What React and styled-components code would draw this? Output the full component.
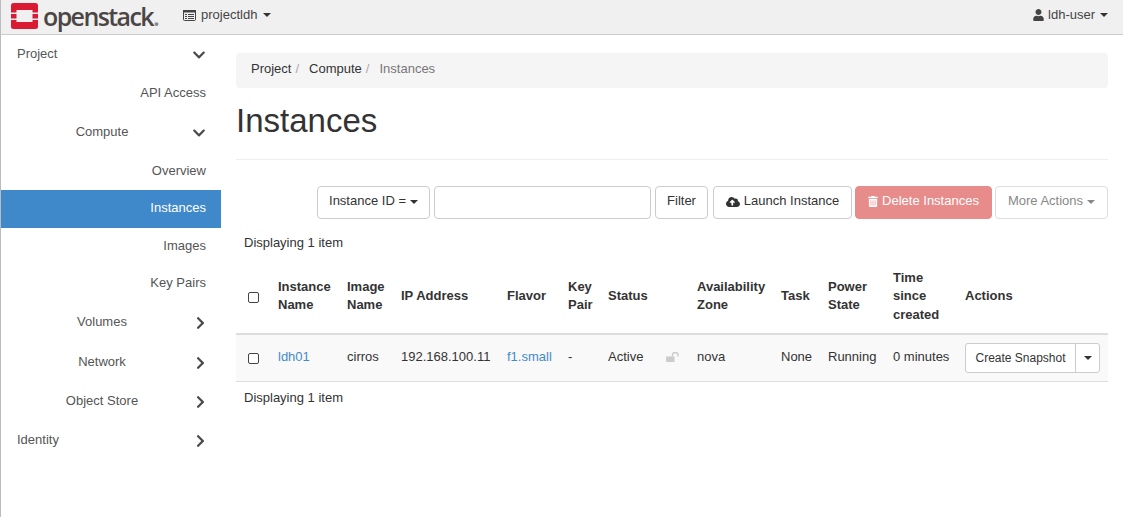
import React from 'react';
import styled, { createGlobalStyle } from 'styled-components';
import {
  FaChevronDown,
  FaChevronRight,
  FaCloudUploadAlt,
  FaTrashAlt,
  FaUser
} from 'react-icons/fa';

const GlobalStyle = createGlobalStyle`
  html, body {
    margin: 0;
    padding: 0;
    background: #fff;
    overflow: hidden;
  }
  body {
    font-family: "Liberation Sans", Arial, sans-serif;
    font-size: 13px;
    line-height: 18.57px;
    color: #333;
  }
  * {
    box-sizing: border-box;
  }
`;

const sideItems = [
  { label: 'Project', kind: 'top', open: true, height: 39 },
  { label: 'API Access', kind: 'leaf', height: 38 },
  { label: 'Compute', kind: 'group', open: true, height: 41 },
  { label: 'Overview', kind: 'leaf', height: 37 },
  { label: 'Instances', kind: 'leaf', active: true, height: 38 },
  { label: 'Images', kind: 'leaf', height: 36 },
  { label: 'Key Pairs', kind: 'leaf', height: 38 },
  { label: 'Volumes', kind: 'group', height: 41 },
  { label: 'Network', kind: 'group', height: 39 },
  { label: 'Object Store', kind: 'group', height: 39 },
  { label: 'Identity', kind: 'top', height: 39 }
];

const columns = [34, 69, 54, 106, 61, 40, 89, 84, 47, 65, 72, 151];

const Logo = () => (
  <svg width="27" height="26" viewBox="0 0 27 26" aria-hidden="true">
    <path
      fill="#da1a32"
      d="M2.500 0h22a2.500 2.500 0 0 1 2.500 2.500v7h-5.500V7H5.500v2.500H0v-7A2.500 2.500 0 0 1 2.500 0zM0 11h5.500v4.500H0zM21.500 11H27v4.500h-5.500zM0 17h5.500v2h16v-2H27v6.500a2.500 2.500 0 0 1-2.500 2.500h-22A2.500 2.500 0 0 1 0 23.500z"
    />
  </svg>
);

const ProjectIcon = () => (
  <svg width="13" height="11" viewBox="0 0 13 11" aria-hidden="true">
    <rect x="0.500" y="0.500" width="12" height="10" rx="1" fill="none" stroke="currentColor" />
    <path fill="currentColor" d="M0 0h13v2.500H0zM2 4h2v1H2zM5 4h6v1H5zM2 6h2v1H2zM5 6h6v1H5zM2 8h2v1H2zM5 8h6v1H5z" />
  </svg>
);

const OpenLock = () => (
  <svg width="13" height="10" viewBox="0 0 13 10" aria-hidden="true">
    <path fill="currentColor" d="M1 4.500h7.500V10H1a1 1 0 0 1-1-1V5.500a1 1 0 0 1 1-1z" />
    <path fill="none" stroke="currentColor" strokeWidth="1.500" d="M6.500 4.500V3a2.500 2.300 0 0 1 5.500 0v1.500" />
  </svg>
);

const App = () => {
  return (
    <Page>
      <GlobalStyle />
      <TopBar>
        <Brand>
          <Logo />
          <BrandName>openstack<BrandDot>.</BrandDot></BrandName>
        </Brand>
        <ProjectPicker>
          <ProjectIcon />
          projectldh
          <Caret />
        </ProjectPicker>
        <UserMenu>
          <FaUser />
          ldh-user
          <Caret />
        </UserMenu>
      </TopBar>

      <Body>
        <Sidebar>
          {sideItems.map((item) => (
            <SideRow
              key={item.label}
              $kind={item.kind}
              $active={item.active}
              $height={item.height}
            >
              <SideLabel $kind={item.kind}>{item.label}</SideLabel>
              {item.kind !== 'leaf' && (
                <SideChevron $open={item.open}>
                  {item.open ? <FaChevronDown /> : <FaChevronRight />}
                </SideChevron>
              )}
            </SideRow>
          ))}
        </Sidebar>

        <Main>
          <Breadcrumb>
            <Crumb>Project</Crumb>
            <CrumbSep>/</CrumbSep>
            <Crumb>Compute</Crumb>
            <CrumbSep>/</CrumbSep>
            <Crumb $current>Instances</Crumb>
          </Breadcrumb>

          <PageHeader>
            <Title>Instances</Title>
          </PageHeader>

          <Toolbar>
            <Button $width={113}>Instance ID = <Caret $dark /></Button>
            <SearchInput />
            <FilterButton>Filter</FilterButton>
            <Button $width={139}><FaCloudUploadAlt /> Launch Instance</Button>
            <DangerButton><FaTrashAlt /> Delete Instances</DangerButton>
            <MutedButton>More Actions <Caret $muted /></MutedButton>
          </Toolbar>

          <Summary>Displaying 1 item</Summary>

          <Table>
            <colgroup>
              {columns.map((width, i) => (
                <col key={i} style={{ width }} />
              ))}
            </colgroup>
            <thead>
              <tr>
                <Th><CheckBox type="checkbox" /></Th>
                <Th>Instance Name</Th>
                <Th>Image Name</Th>
                <Th>IP Address</Th>
                <Th>Flavor</Th>
                <Th>Key Pair</Th>
                <Th>Status</Th>
                <Th>Availability Zone</Th>
                <Th>Task</Th>
                <Th>Power State</Th>
                <Th>Time since created</Th>
                <Th>Actions</Th>
              </tr>
            </thead>
            <tbody>
              <tr>
                <Td><CheckBox type="checkbox" /></Td>
                <Td><TableLink>ldh01</TableLink></Td>
                <Td>cirros</Td>
                <Td>192.168.100.11</Td>
                <Td><TableLink>f1.small</TableLink></Td>
                <Td>-</Td>
                <Td>
                  <StatusCell>
                    Active
                    <LockIcon><OpenLock /></LockIcon>
                  </StatusCell>
                </Td>
                <Td>nova</Td>
                <Td>None</Td>
                <Td>Running</Td>
                <Td>0 minutes</Td>
                <Td>
                  <SplitButton>
                    <SplitMain>Create Snapshot</SplitMain>
                    <SplitToggle><Caret $dark /></SplitToggle>
                  </SplitButton>
                </Td>
              </tr>
            </tbody>
          </Table>

          <Summary $after>Displaying 1 item</Summary>
        </Main>
      </Body>
    </Page>
  );
};

const Page = styled.div`
  width: 1123px;
  height: 517px;
  overflow: hidden;
  background: #fff;
`;

const TopBar = styled.header`
  display: flex;
  align-items: center;
  height: 35px;
  padding: 0 15px 2px 10px;
  background: #f0f0f0;
  border-left: 1px solid #bbb;
  border-bottom: 1px solid #ccc;
  color: #444;
`;

const Brand = styled.div`
  display: flex;
  align-items: center;
  gap: 5px;
  width: 172px;
  svg {
    flex: none;
  }
`;

const BrandName = styled.span`
  font-family: "Open Sans", sans-serif;
  font-size: 25px;
  font-weight: 600;
  line-height: 30px;
  letter-spacing: -1.6px;
  color: #4b4645;
`;

const BrandDot = styled.span`
  color: #888;
`;

const ProjectPicker = styled.div`
  display: flex;
  align-items: center;
  gap: 5px;
  margin-bottom: 2px;
`;

const UserMenu = styled.div`
  display: flex;
  align-items: center;
  gap: 4px;
  margin-left: auto;
  margin-bottom: 2px;
  svg {
    width: 11px;
    height: 12px;
  }
`;

const Caret = styled.span`
  display: inline-block;
  width: 0;
  height: 0;
  margin-left: ${(p) => (p.$dark || p.$muted ? '0' : '1px')};
  vertical-align: middle;
  border-top: 4px solid ${(p) => (p.$muted ? '#888' : '#333')};
  border-left: 4px solid transparent;
  border-right: 4px solid transparent;
`;

const Body = styled.div`
  display: flex;
  align-items: flex-start;
`;

const Sidebar = styled.nav`
  flex: none;
  width: 221px;
  height: 482px;
  border-left: 1px solid #bbb;
`;

const SideRow = styled.div`
  display: flex;
  align-items: center;
  height: ${(p) => p.$height}px;
  padding: 0 15px ${(p) => (p.$active ? '2px' : '0')} ${(p) => (p.$kind === 'top' ? '16px' : '11px')};
  color: ${(p) => (p.$active ? '#fff' : '#555')};
  background: ${(p) => (p.$active ? '#3f88c9' : 'transparent')};
`;

const SideLabel = styled.span`
  flex: 1;
  text-align: ${(p) => (p.$kind === 'top' ? 'left' : p.$kind === 'leaf' ? 'right' : 'center')};
`;

const SideChevron = styled.span`
  flex: none;
  display: flex;
  justify-content: center;
  width: 14px;
  padding-left: ${(p) => (p.$open ? '0' : '3px')};
  color: #4a4a4a;
  svg {
    width: 14px;
    height: 14px;
  }
`;

const Main = styled.main`
  flex: none;
  width: 872px;
  margin-left: 15px;
  padding-top: 18px;
`;

const Breadcrumb = styled.div`
  display: flex;
  align-items: flex-start;
  height: 35px;
  padding: 7px 15px 0;
  background: #f5f5f5;
  border-radius: 4px;
`;

const Crumb = styled.span`
  color: ${(p) => (p.$current ? '#777' : '#333')};
`;

const CrumbSep = styled.span`
  color: #aaa;
  margin: 0 10px 0 4px;
`;

const PageHeader = styled.div`
  height: 72px;
  padding-top: 13px;
  border-bottom: 1px solid #eee;
`;

const Title = styled.h1`
  margin: 0;
  font-size: 33px;
  font-weight: 400;
  line-height: 40px;
  color: #333;
`;

const Toolbar = styled.div`
  display: flex;
  justify-content: flex-end;
  gap: 3px;
  margin-top: 26px;
`;

const Button = styled.button`
  display: inline-flex;
  align-items: center;
  justify-content: center;
  gap: 4px;
  width: ${(p) => (p.$width ? `${p.$width}px` : 'auto')};
  height: 33px;
  padding: 0 10px 2px;
  background: #fff;
  border: 1px solid #ccc;
  border-radius: 4px;
  color: #333;
  font: inherit;
  white-space: nowrap;
  svg {
    width: 14px;
    height: 14px;
  }
`;

const FilterButton = styled(Button)`
  width: 53px;
  margin-right: 2px;
`;

const DangerButton = styled(Button)`
  width: 137px;
  background: #e78c8b;
  border-color: #e78c8b;
  color: #fff;
  svg {
    width: 10px;
    height: 11px;
  }
`;

const MutedButton = styled(Button)`
  width: 113px;
  border-color: #ddd;
  color: #888;
`;

const SearchInput = styled.input`
  width: 217px;
  height: 33px;
  margin: 0 1px;
  padding: 0 12px;
  border: 1px solid #ccc;
  border-radius: 4px;
  font: inherit;
`;

const Summary = styled.div`
  padding: 0 8px;
  margin-top: ${(p) => (p.$after ? '7px' : '15px')};
  margin-bottom: ${(p) => (p.$after ? '0' : '9px')};
`;

const Table = styled.table`
  width: 872px;
  table-layout: fixed;
  border-collapse: collapse;
`;

const Th = styled.th`
  padding: 7px 8px 9px;
  text-align: left;
  vertical-align: middle;
  font-weight: 700;
  border-bottom: 2px solid #ddd;
`;

const Td = styled.td`
  height: 47px;
  padding: 5px 8px 7px;
  vertical-align: middle;
  background: #f9f9f9;
  border-bottom: 1px solid #ddd;
  white-space: nowrap;
`;

const CheckBox = styled.input`
  appearance: none;
  display: block;
  width: 11px;
  height: 11px;
  margin: 1px 0 -1px 4px;
  background: #fff;
  border: 1px solid #444;
  border-radius: 2px;
`;

const TableLink = styled.a`
  color: #428bca;
`;

const StatusCell = styled.div`
  display: flex;
  align-items: center;
  justify-content: space-between;
  padding-right: 2px;
`;

const LockIcon = styled.span`
  display: flex;
  color: #ccc;
`;

const SplitButton = styled.div`
  display: flex;
  width: 135px;
  height: 30px;
  margin: 1px 0 -1px;
  border: 1px solid #ccc;
  border-radius: 3px;
  background: #fff;
  font-size: 12px;
`;

const SplitMain = styled.span`
  display: flex;
  align-items: center;
  justify-content: center;
  width: 110px;
  border-right: 1px solid #ccc;
`;

const SplitToggle = styled.span`
  display: flex;
  align-items: center;
  justify-content: center;
  flex: 1;
`;

export default App;
